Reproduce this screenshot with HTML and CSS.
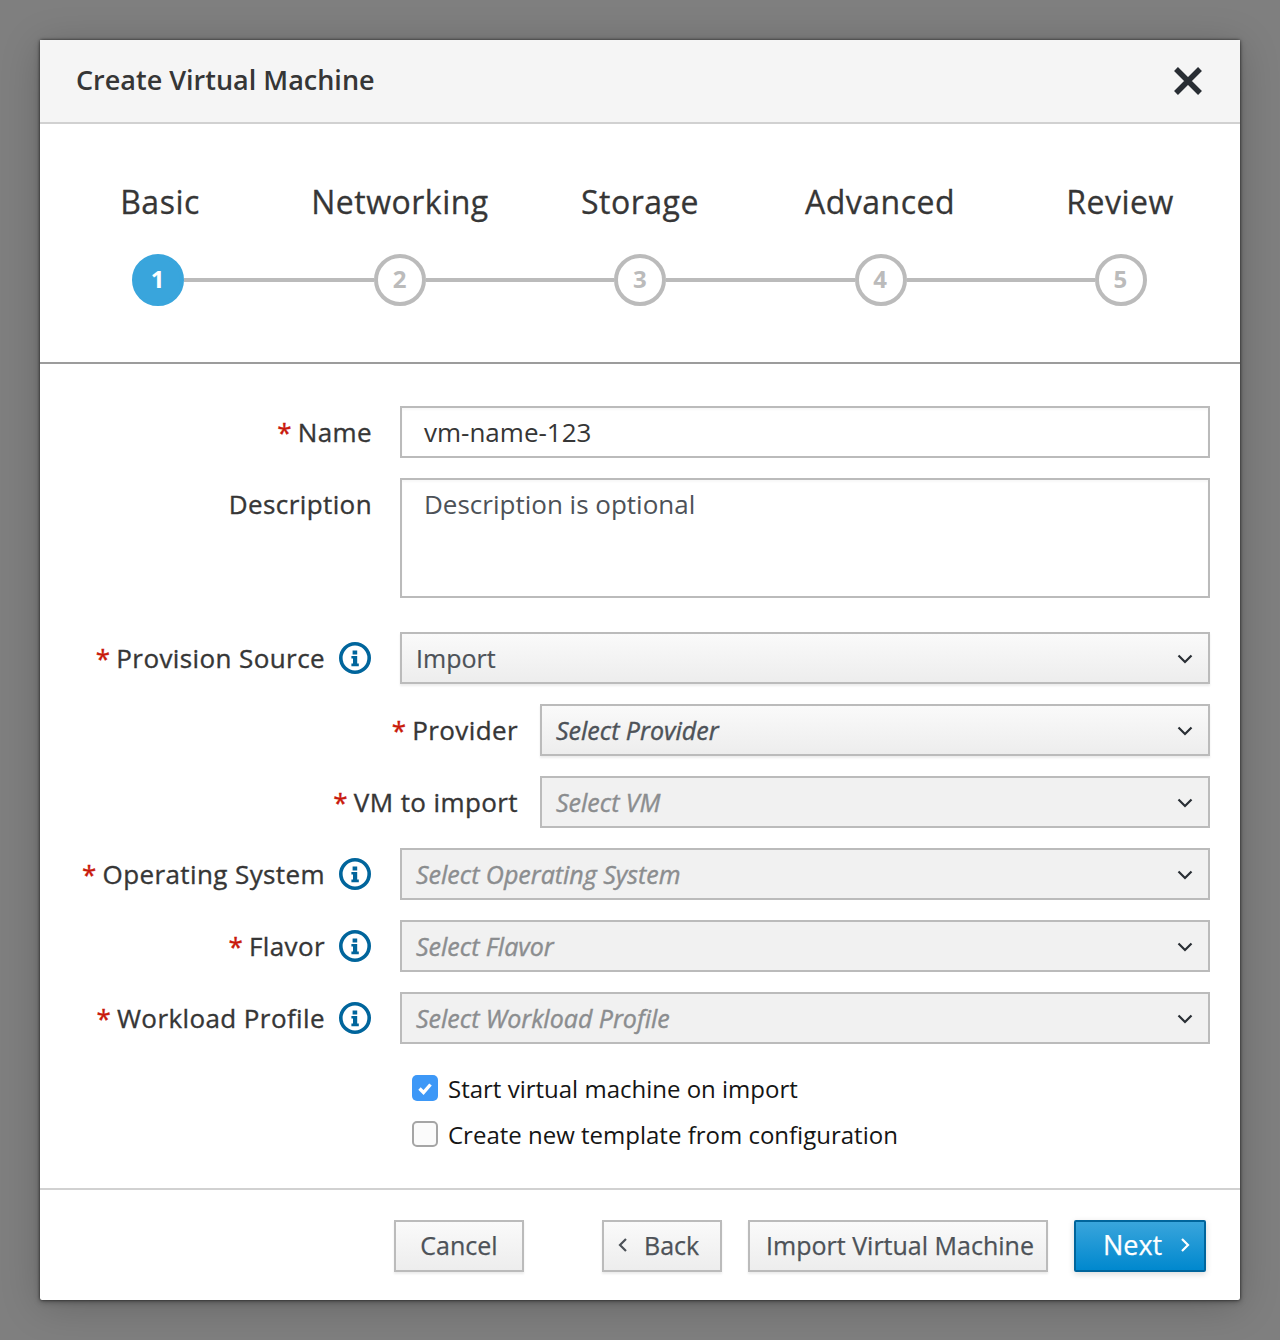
FILE: index.html
```html
<!DOCTYPE html>
<html lang="en">
<head>
    <meta charset="UTF-8">
    <meta name="viewport" content="width=device-width, initial-scale=1.0">
    <title>Create Virtual Machine</title>
    <link rel="stylesheet" href="styles.css">
</head>
<body>
    <div class="modal">
        <div class="modal-header">
            <h1 class="modal-title">Create Virtual Machine</h1>
            <svg class="close-icon" viewBox="0 0 30 30"><path d="M3 3 27 27M27 3 3 27"/></svg>
        </div>

        <div class="wizard-steps">
            <div class="step-labels">
                <span>Basic</span>
                <span>Networking</span>
                <span>Storage</span>
                <span>Advanced</span>
                <span>Review</span>
            </div>
            <div class="step-track">
                <span class="step-dot step-active">1</span>
                <span class="step-line step-line-first"></span>
                <span class="step-dot">2</span>
                <span class="step-line"></span>
                <span class="step-dot">3</span>
                <span class="step-line"></span>
                <span class="step-dot">4</span>
                <span class="step-line"></span>
                <span class="step-dot">5</span>
            </div>
        </div>

        <div class="form">
            <div class="form-row">
                <label class="form-label"><span><i class="req">*</i> Name</span></label>
                <div class="text-input">vm-name-123</div>
            </div>
            <div class="form-row row-description">
                <label class="form-label">Description</label>
                <div class="text-input text-area">Description is optional</div>
            </div>
            <div class="form-row row-source">
                <label class="form-label with-info"><span><i class="req">*</i> Provision Source</span>
                    <svg class="info-icon" viewBox="0 0 32 32"><circle cx="16" cy="16" r="14.2"/><path class="info-glyph" d="M13.6 8.4h4.6v4h-4.6zM12.4 14h5.8v7.6h1.6v2.6h-7.4v-2.6h1.6v-5h-1.6z"/></svg>
                </label>
                <div class="select">Import<svg class="caret" viewBox="0 0 16 10"><path d="M1.5 1.5 8 8l6.5-6.5"/></svg></div>
            </div>
            <div class="form-row row-sub">
                <label class="form-label"><span><i class="req">*</i> Provider</span></label>
                <div class="select select-placeholder">Select Provider<svg class="caret" viewBox="0 0 16 10"><path d="M1.5 1.5 8 8l6.5-6.5"/></svg></div>
            </div>
            <div class="form-row row-sub">
                <label class="form-label"><span><i class="req">*</i> VM to import</span></label>
                <div class="select select-disabled">Select VM<svg class="caret" viewBox="0 0 16 10"><path d="M1.5 1.5 8 8l6.5-6.5"/></svg></div>
            </div>
            <div class="form-row">
                <label class="form-label with-info"><span><i class="req">*</i> Operating System</span>
                    <svg class="info-icon" viewBox="0 0 32 32"><circle cx="16" cy="16" r="14.2"/><path class="info-glyph" d="M13.6 8.4h4.6v4h-4.6zM12.4 14h5.8v7.6h1.6v2.6h-7.4v-2.6h1.6v-5h-1.6z"/></svg>
                </label>
                <div class="select select-disabled">Select Operating System<svg class="caret" viewBox="0 0 16 10"><path d="M1.5 1.5 8 8l6.5-6.5"/></svg></div>
            </div>
            <div class="form-row">
                <label class="form-label with-info"><span><i class="req">*</i> Flavor</span>
                    <svg class="info-icon" viewBox="0 0 32 32"><circle cx="16" cy="16" r="14.2"/><path class="info-glyph" d="M13.6 8.4h4.6v4h-4.6zM12.4 14h5.8v7.6h1.6v2.6h-7.4v-2.6h1.6v-5h-1.6z"/></svg>
                </label>
                <div class="select select-disabled">Select Flavor<svg class="caret" viewBox="0 0 16 10"><path d="M1.5 1.5 8 8l6.5-6.5"/></svg></div>
            </div>
            <div class="form-row">
                <label class="form-label with-info"><span><i class="req">*</i> Workload Profile</span>
                    <svg class="info-icon" viewBox="0 0 32 32"><circle cx="16" cy="16" r="14.2"/><path class="info-glyph" d="M13.6 8.4h4.6v4h-4.6zM12.4 14h5.8v7.6h1.6v2.6h-7.4v-2.6h1.6v-5h-1.6z"/></svg>
                </label>
                <div class="select select-disabled">Select Workload Profile<svg class="caret" viewBox="0 0 16 10"><path d="M1.5 1.5 8 8l6.5-6.5"/></svg></div>
            </div>

            <div class="checks">
                <div class="check-row">
                    <span class="checkbox checkbox-on"><svg viewBox="0 0 26 26"><path d="M7.5 13.5 11.5 17.5 18.5 9.5"/></svg></span>
                    Start virtual machine on import
                </div>
                <div class="check-row">
                    <span class="checkbox"></span>
                    Create new template from configuration
                </div>
            </div>
        </div>

        <div class="modal-footer">
            <button class="btn btn-cancel">Cancel</button>
            <button class="btn btn-back"><svg class="btn-arrow" viewBox="0 0 10 16"><path d="M8 2 2 8l6 6"/></svg>Back</button>
            <button class="btn btn-import">Import Virtual Machine</button>
            <button class="btn btn-primary">Next<svg class="btn-arrow" viewBox="0 0 10 16"><path d="M2 2l6 6-6 6"/></svg></button>
        </div>
    </div>
</body>
</html>
```

FILE: styles.css
```css
* {
    box-sizing: border-box;
}

body {
    margin: 0;
    height: 1340px;
    padding: 40px;
    background: #7f7f7f;
    font-family: "Open Sans", sans-serif;
    color: #363636;
    overflow: hidden;
}

.modal {
    width: 1200px;
    height: 1260px;
    background: #fff;
    border-radius: 2px;
    box-shadow: 0 0 3px rgba(0, 0, 0, .7), 0 2px 6px rgba(0, 0, 0, .3), 0 6px 40px rgba(0, 0, 0, .2);
}

.modal-header {
    height: 84px;
    padding: 0 36px 4px;
    background: #f5f5f5;
    border-bottom: 2px solid #d1d1d1;
    display: flex;
    align-items: center;
    justify-content: space-between;
}

.modal-title {
    margin: 0;
    font-size: 27px;
    font-weight: 600;
    color: #363636;
}

.close-icon {
    width: 30px;
    height: 30px;
    margin: 4px 1px 0 0;
}

.close-icon path {
    fill: none;
    stroke: #292e34;
    stroke-width: 5.5;
}

.wizard-steps {
    height: 240px;
    border-bottom: 2px solid #9c9c9c;
    padding-top: 56px;
}

.step-labels {
    display: grid;
    grid-template-columns: repeat(5, 1fr);
    text-align: center;
    font-size: 32px;
    line-height: 44px;
    letter-spacing: .5px;
    -webkit-text-stroke: .3px;
}

.step-track {
    display: flex;
    align-items: center;
    margin-top: 30px;
    padding: 0 93px 0 92px;
}

.step-dot {
    width: 52px;
    height: 52px;
    flex: none;
    border: 4px solid #bbb;
    border-radius: 50%;
    padding: 0 1px 3px 0;
    display: flex;
    align-items: center;
    justify-content: center;
    background: #fff;
    color: #bbb;
    font-size: 24px;
    font-weight: 700;
}

.step-active {
    background: #39a5dc;
    border-color: #39a5dc;
    color: #fff;
}

.step-line {
    flex: 1;
    height: 4px;
    background: #bbb;
}

.step-line-first {
    flex: 0 0 190px;
}

.form {
    height: 826px;
    padding: 42px 30px 0 0;
    border-bottom: 2px solid #d1d1d1;
}

.form-row {
    display: flex;
    align-items: center;
    min-height: 52px;
    margin-bottom: 20px;
    font-size: 26px;
}

.row-description {
    align-items: flex-start;
    margin-bottom: 34px;
}

.row-description .form-label {
    line-height: 52px;
}

.form-label {
    width: 332px;
    flex: none;
    margin-right: 28px;
    display: flex;
    align-items: center;
    justify-content: flex-end;
    gap: 14px;
    letter-spacing: .4px;
    -webkit-text-stroke: .35px;
    white-space: nowrap;
}

.with-info {
    padding-right: 1px;
}

.row-sub .form-label {
    width: 478px;
    margin-right: 22px;
}

.req {
    font-style: normal;
    font-size: 26px;
    line-height: 1;
    letter-spacing: -1px;
    color: #c9190b;
}

.info-icon {
    width: 32px;
    height: 32px;
    flex: none;
}

.info-icon circle {
    fill: #fff;
    stroke: #00659c;
    stroke-width: 3.6;
}

.info-glyph {
    fill: #00659c;
}

.text-input {
    flex: 1;
    height: 52px;
    padding: 0 22px;
    border: 2px solid #bbb;
    line-height: 48px;
    box-shadow: inset 0 2px 2px rgba(3, 3, 3, .03);
}

.text-area {
    height: 120px;
    color: #4d5258;
}

.select {
    flex: 1;
    height: 52px;
    padding: 0 15px 0 14px;
    border: 2px solid #bbb;
    background: linear-gradient(to bottom, #fafafa 0%, #ededed 100%);
    box-shadow: 0 2px 2px rgba(3, 3, 3, .08);
    display: flex;
    align-items: center;
    justify-content: space-between;
    font-size: 25px;
    color: #4d5258;
    -webkit-text-stroke: .2px;
}

.select-placeholder {
    font-style: italic;
    -webkit-text-stroke: .4px;
}

.select-disabled {
    font-style: italic;
    background: #f1f1f1;
    color: #8b8d8f;
    box-shadow: none;
    -webkit-text-stroke: .4px;
}

.caret {
    width: 16px;
    height: 10px;
    flex: none;
    margin-top: 2px;
}

.caret path {
    fill: none;
    stroke: #292e34;
    stroke-width: 2.2;
}

.checks {
    padding-left: 372px;
    margin-top: 21px;
    font-size: 24px;
    color: #151515;
}

.check-row {
    display: flex;
    align-items: center;
    gap: 10px;
    height: 46px;
}

.checkbox {
    width: 26px;
    height: 26px;
    flex: none;
    border: 2px solid #a5a5a5;
    border-radius: 5px;
    background: #fbfbfb;
}

.checkbox-on {
    border: none;
    background: #3d98f7;
}

.checkbox svg {
    display: block;
}

.checkbox svg path {
    fill: none;
    stroke: #fff;
    stroke-width: 3.4;
}

.modal-footer {
    height: 108px;
    padding: 30px 34px 0 354px;
    display: flex;
    align-items: flex-start;
}

.btn {
    height: 52px;
    padding: 0 14px 3px;
    border: 2px solid #bbb;
    background: linear-gradient(to bottom, #fafafa 0%, #ededed 100%);
    box-shadow: 0 2px 2px rgba(3, 3, 3, .08);
    color: #4d5258;
    font-family: "Open Sans", sans-serif;
    font-size: 25px;
    -webkit-text-stroke: .25px;
    white-space: nowrap;
    display: flex;
    align-items: center;
    justify-content: center;
}

.btn-arrow {
    width: 10px;
    height: 16px;
    flex: none;
}

.btn-arrow path {
    fill: none;
    stroke: currentColor;
    stroke-width: 2.2;
}

.btn-cancel {
    width: 130px;
    margin-right: 78px;
}

.btn-back {
    width: 120px;
    margin-right: 26px;
    gap: 16px;
    justify-content: flex-start;
}

.btn-import {
    width: 300px;
    margin-right: 26px;
    padding-left: 18px;
    padding-right: 14px;
}

.btn-primary {
    width: 132px;
    padding-left: 27px;
    gap: 18px;
    justify-content: flex-start;
    color: #fff;
    font-size: 27px;
    border-color: #00659c;
    border-radius: 2px;
    background: linear-gradient(to bottom, #39a5dc 0%, #0088ce 100%);
    box-shadow: 0 2px 6px rgba(3, 3, 3, .15);
}
```
